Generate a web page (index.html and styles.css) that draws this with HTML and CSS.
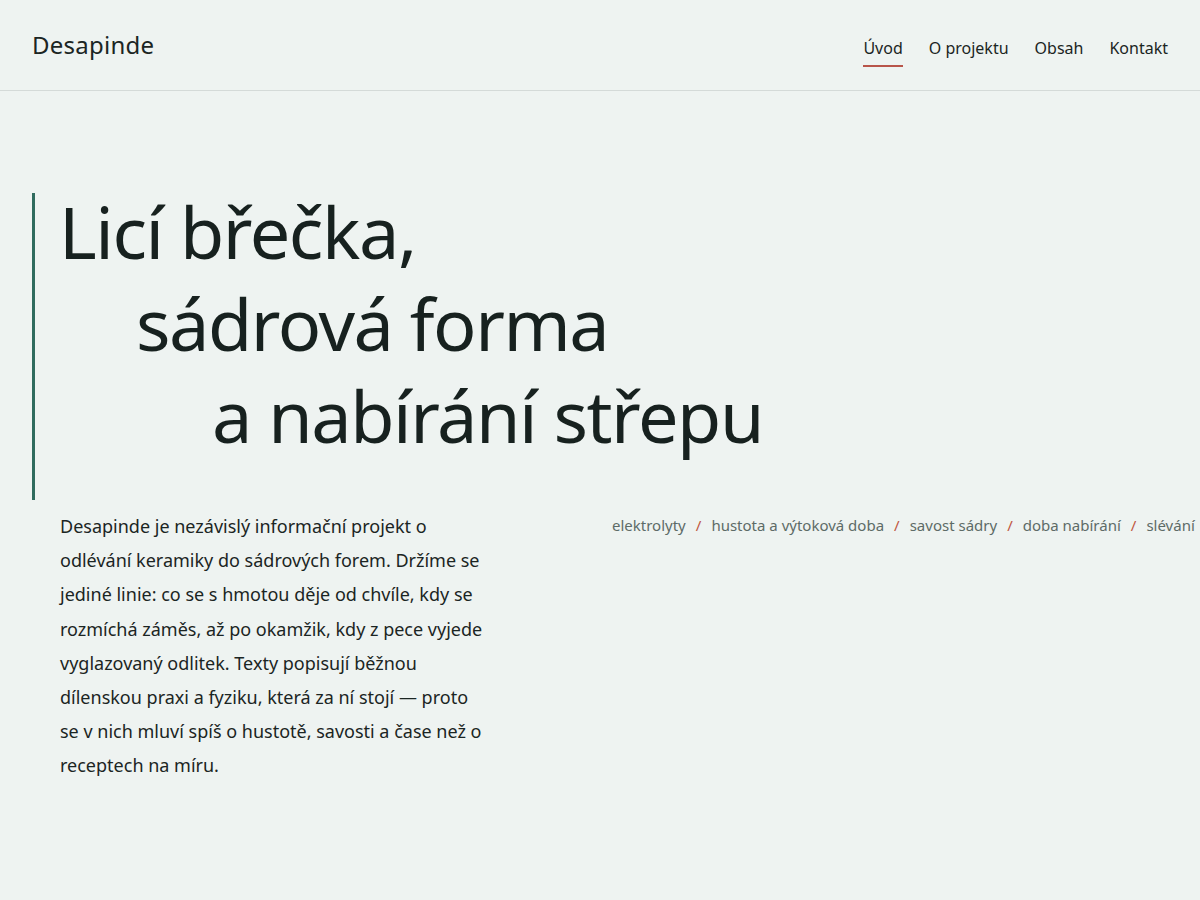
FILE: index.html
```html
<!DOCTYPE html>
<html lang="cs">
<head>
<meta charset="utf-8">
<title>Desapinde</title>
<link rel="stylesheet" href="styles.css">
</head>
<body>
<div class="page">
  <header class="site-header">
    <div class="logo">Desapinde</div>
    <nav class="nav">
      <a class="nav-link active" href="#">Úvod</a>
      <a class="nav-link" href="#">O projektu</a>
      <a class="nav-link" href="#">Obsah</a>
      <a class="nav-link" href="#">Kontakt</a>
    </nav>
  </header>
  <main class="main">
    <section class="hero">
      <h1 class="hero-title">
        <span class="line line-1">Licí břečka,</span>
        <span class="line line-2">sádrová forma</span>
        <span class="line line-3">a nabírání střepu</span>
      </h1>
    </section>
    <div class="intro">
      <p class="lead">Desapinde je nezávislý informační projekt o odlévání keramiky do sádrových forem. Držíme se jediné linie: co se s hmotou děje od chvíle, kdy se rozmíchá záměs, až po okamžik, kdy z pece vyjede vyglazovaný odlitek. Texty popisují běžnou dílenskou praxi a fyziku, která za ní stojí — proto se v nich mluví spíš o hustotě, savosti a čase než o receptech na míru.</p>
      <ul class="tags">
        <li>elektrolyty</li>
        <li class="sep">/</li>
        <li>hustota a výtoková doba</li>
        <li class="sep">/</li>
        <li>savost sádry</li>
        <li class="sep">/</li>
        <li>doba nabírání</li>
        <li class="sep">/</li>
        <li>slévání</li>
      </ul>
    </div>
  </main>
</div>
</body>
</html>
```

FILE: styles.css
```css
html, body {
  margin: 0;
  padding: 0;
}
body {
  background: #eef3f1;
  color: #1b2523;
  font-family: "Noto Sans", "Open Sans", sans-serif;
  overflow-x: hidden;
}
.page {
  width: 1200px;
  min-height: 900px;
  overflow: hidden;
}
.site-header {
  box-sizing: border-box;
  height: 91px;
  padding: 28px 32px 0 32px;
  display: flex;
  align-items: baseline;
  justify-content: space-between;
  border-bottom: 1px solid #d4dad8;
}
.logo {
  font-size: 24px;
  letter-spacing: 0.01em;
  color: #1b2523;
}
.nav {
  display: flex;
  gap: 26px;
}
.nav-link {
  font-size: 16px;
  color: #1b2523;
  text-decoration: none;
  padding-bottom: 6px;
  border-bottom: 2px solid transparent;
}
.nav-link.active {
  border-bottom-color: #b8554a;
}
.main {
  padding: 102px 32px 0 32px;
}
.hero {
  border-left: 3px solid #2f6b5e;
  padding: 0 0 47px 24px;
}
.hero-title {
  margin: 0;
  font-size: 72px;
  font-weight: 400;
  line-height: 76px;
  color: #17211f;
  display: flex;
  flex-direction: column;
  gap: 16px;
  letter-spacing: -0.02em;
}
.line {
  display: block;
  white-space: nowrap;
}
.line-2 {
  padding-left: 77px;
}
.line-3 {
  padding-left: 153px;
}
.intro {
  margin-top: 9px;
  display: grid;
  grid-template-columns: minmax(0, 1fr) minmax(0, 1fr);
  column-gap: 24px;
}
.lead {
  margin: 0;
  padding-left: 28px;
  max-width: 430px;
  font-size: 18px;
  line-height: 34.2px;
  color: #1b2523;
}
.tags {
  list-style: none;
  margin: 0;
  padding: 6px 0 0 0;
  display: flex;
  gap: 10px;
  white-space: nowrap;
  font-size: 15px;
  line-height: 20px;
  color: #5d6b67;
}
.tags li {
  flex-shrink: 0;
}
.tags .sep {
  color: #c0563f;
}
```
